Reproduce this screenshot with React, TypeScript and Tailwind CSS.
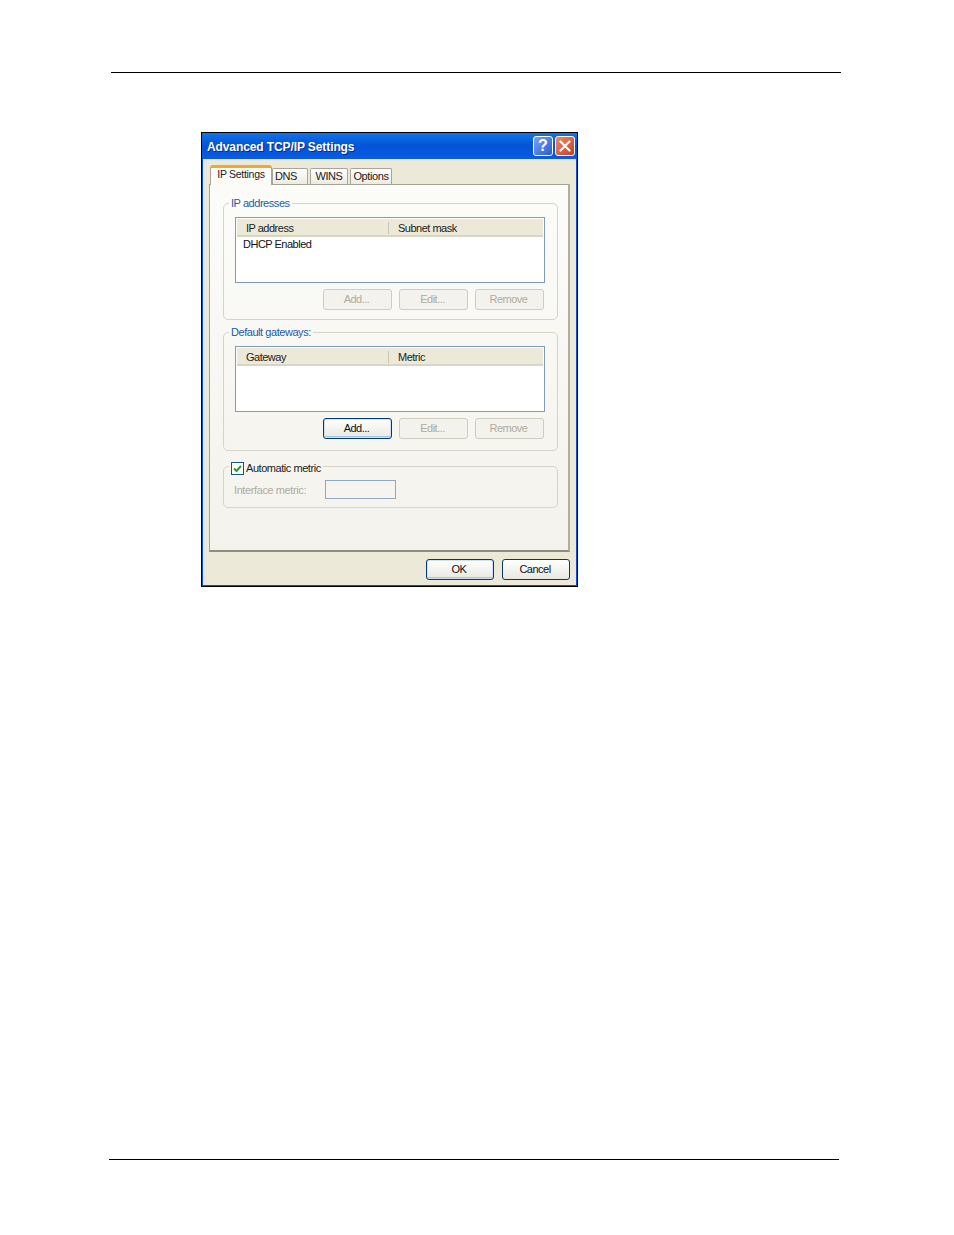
import React from "react";

function Btn({ label, on, def, w = "w-[69px]" }: { label: string; on?: boolean; def?: boolean; w?: string }) {
  if (on || def) {
    return (
      <div className={`${w} h-[21px] rounded-[3px] border border-[#003c74] bg-gradient-to-b from-[#ffffff] to-[#e9e8e0] flex items-center justify-center pr-[2px] text-[11px] tracking-[-0.5px] text-[#111] ${def ? "shadow-[inset_0_0_0_1px_#cfe0f5,inset_0_-1px_0_1px_#a9c4ea]" : ""}`}>
        {label}
      </div>
    );
  }
  return (
    <div className={`${w} h-[21px] rounded-[3px] border border-[#cfcdc0] bg-[#f4f2ec] flex items-center justify-center pr-[2px] text-[11px] tracking-[-0.5px] text-[#aeaca0]`}>
      {label}
    </div>
  );
}

function ListBox({ a, b, row }: { a: string; b: string; row?: string }) {
  return (
    <div className="h-[66px] border border-[#7f9db9] bg-white pl-[1px] pr-[1px] pt-[1px]">
      <div className="h-[18px] pt-[2px] flex items-center bg-[#ece9d8] border-b-2 border-[#d8d5c4] text-[11px] tracking-[-0.5px] text-[#222]">
        <div className="w-[152px] pl-[9px] border-r border-[#c8c5b4] h-[12px] flex items-center">{a}</div>
        <div className="pl-[9px]">{b}</div>
      </div>
      {row && <div className="pl-[6px] text-[11px] tracking-[-0.5px] leading-[14px] text-[#111]">{row}</div>}
    </div>
  );
}

function Group({ title, className, children }: { title: React.ReactNode; className: string; children: React.ReactNode }) {
  return (
    <fieldset className={`border border-[#d6d3c8] rounded-[5px] ${className}`}>
      <legend className="ml-[5px] px-[2px] h-[14px] leading-[14px] text-[11px] tracking-[-0.45px] text-[#1f5aa8]">{title}</legend>
      {children}
    </fieldset>
  );
}

function Tab({ label, w, active, align = "justify-center" }: { label: string; w: string; active?: boolean; align?: string }) {
  if (active) {
    return (
      <div className={`${w} h-[20px] -mb-[1px] z-10 rounded-t-[3px] border-x border-[#a8a698] border-t-[3px] border-t-[#f0a830] bg-[#fcfbf8] text-[10.5px] tracking-[-0.3px] text-[#222] flex items-center justify-center pb-[3px]`}>
        {label}
      </div>
    );
  }
  return (
    <div className={`${w} h-[16px] rounded-t-[2px] border border-b-0 border-[#a8a698] bg-gradient-to-b from-[#ffffff] to-[#ecebe2] text-[11px] tracking-[-0.4px] text-[#222] flex items-center ${align}`}>
      {label}
    </div>
  );
}

export default function App() {
  return (
    <div className="w-[954px] h-[1235px] bg-white overflow-hidden font-['Liberation_Sans',Arial,sans-serif]">
      <div className="pt-[72px] pl-[111px]">
        <div className="w-[730px] h-px bg-black" />
      </div>
      <div className="ml-[201px] mt-[59px] w-[377px] h-[455px] border border-black bg-[#0a4fd8] flex flex-col">
        <div className="h-[26px] shrink-0 flex items-center justify-between pl-[5px] pr-[2px] bg-gradient-to-b from-[#1474ea] via-[#0452d8] to-[#0a5ce6]">
          <span className="pt-[2px] text-white font-bold text-[12px] tracking-[-0.1px] [text-shadow:1px_1px_0_#0a2a80]">Advanced TCP/IP Settings</span>
          <div className="flex gap-[2px]">
            <div className="w-[20px] h-[20px] rounded-[3px] border border-white bg-gradient-to-br from-[#7aa4f2] to-[#2a5ad0] flex items-center justify-center text-white font-bold text-[16px] leading-none">?</div>
            <div className="w-[20px] h-[20px] rounded-[3px] border border-white bg-gradient-to-br from-[#e88a6a] to-[#c83c1c] flex items-center justify-center">
              <svg width="12" height="12" viewBox="0 0 12 12">
                <path d="M1.5 1.5 L10.5 10.5 M10.5 1.5 L1.5 10.5" stroke="#fff" strokeWidth="2.2" strokeLinecap="round" />
              </svg>
            </div>
          </div>
        </div>
        <div className="flex-1 ml-[1px] mr-px mb-px bg-[#ece9d8] pl-[6px] pr-[6px] pt-[6px] flex flex-col">
          <div className="flex items-end h-[19px] pl-[1px]">
            <Tab label="IP Settings" w="w-[62px]" active />
            <Tab label="DNS" w="w-[36px] pl-[2px]" align="justify-start" />
            <div className="w-[2px]" />
            <Tab label="WINS" w="w-[38px]" />
            <div className="w-[2px]" />
            <Tab label="Options" w="w-[42px]" />
          </div>
          <div className="h-[368px] border border-[#a4a294] border-b-2 border-r-2 border-b-[#8f8d80] border-r-[#b0ae9f] bg-gradient-to-b from-[#fcfcf9] to-[#f4f2ec] pl-[13px] pr-[10px] pt-[11px]">
            <Group title="IP addresses" className="h-[124px]">
              <div className="pt-[7px] pl-[11px] pr-[12px]">
                <ListBox a="IP address" b="Subnet mask" row="DHCP Enabled" />
                <div className="flex justify-end gap-[7px] mt-[6px] pr-[1px]">
                  <Btn label="Add..." />
                  <Btn label="Edit..." />
                  <Btn label="Remove" />
                </div>
              </div>
            </Group>
            <Group title="Default gateways:" className="mt-[5px] h-[126px]">
              <div className="pt-[7px] pl-[11px] pr-[12px]">
                <ListBox a="Gateway" b="Metric" />
                <div className="flex justify-end gap-[7px] mt-[6px] pr-[1px]">
                  <Btn label="Add..." def />
                  <Btn label="Edit..." />
                  <Btn label="Remove" />
                </div>
              </div>
            </Group>
            <Group
              title={
                <span className="flex items-center gap-[2px] text-[#222] translate-y-[2px]">
                  <span className="w-[13px] h-[13px] border border-[#1c5180] bg-white flex items-center justify-center">
                    <svg width="9" height="9" viewBox="0 0 9 9">
                      <path d="M1 4.5 L3.5 7 L8 2" fill="none" stroke="#21a121" strokeWidth="2" />
                    </svg>
                  </span>
                  Automatic metric
                </span>
              }
              className="mt-[8px] h-[49px]"
            >
              <div className="flex items-center pt-[7px] pl-[10px]">
                <span className="w-[91px] pt-[2px] text-[11px] tracking-[-0.4px] text-[#aeaca0]">Interface metric:</span>
                <div className="w-[71px] h-[19px] border border-[#8fa8c4] bg-[#f6f4ef]" />
              </div>
            </Group>
          </div>
          <div className="flex justify-end gap-[8px] mt-[7px]">
            <Btn label="OK" def w="w-[68px]" />
            <Btn label="Cancel" on w="w-[68px]" />
          </div>
        </div>
      </div>
      <div className="pl-[109px] mt-[572px]">
        <div className="w-[730px] h-px bg-black" />
      </div>
    </div>
  );
}
